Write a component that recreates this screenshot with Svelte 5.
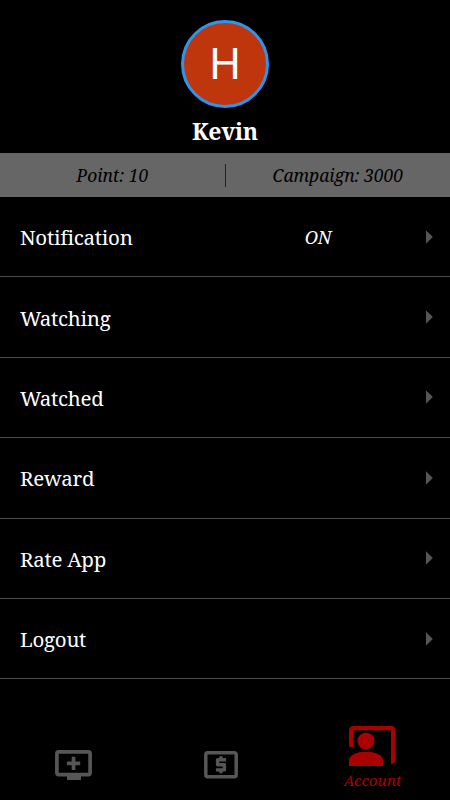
<script lang="ts">
    type MenuItem = {
        label: string;
        value?: string;
    };

    const name = "Kevin";
    const points = 10;
    const campaign = 3000;

    let notificationsOn = $state(true);

    let items: MenuItem[] = $derived([
        { label: "Notification", value: notificationsOn ? "ON" : "OFF" },
        { label: "Watching" },
        { label: "Watched" },
        { label: "Reward" },
        { label: "Rate App" },
        { label: "Logout" },
    ]);

    function select(item: MenuItem) {
        if (item.label === "Notification") {
            notificationsOn = !notificationsOn;
        }
    }
</script>

<div class="screen">
    <header>
        <div class="avatar">H</div>
        <h1>{name}</h1>
    </header>

    <div class="stats">
        <span class="point">Point: {points}</span>
        <span class="divider"></span>
        <span class="campaign">Campaign: {campaign}</span>
    </div>

    <main>
        {#each items as item}
            <button class="row" type="button" onclick={() => select(item)}>
                <span class="label">{item.label}</span>
                {#if item.value}
                    <span class="value">{item.value}</span>
                {/if}
                <svg class="arrow" width="7" height="14" viewBox="0 0 7 14">
                    <path d="M0 0.3 6.8 7 0 13.7z" fill="#565656" />
                </svg>
            </button>
        {/each}
    </main>

    <nav>
        <button class="tab videos" type="button" aria-label="Add video">
            <svg width="37" height="31" viewBox="0 0 37 31">
                <rect x="1.9" y="1.9" width="33.2" height="22.7" rx="1.8" fill="none" stroke="#565656" stroke-width="3.7" />
                <path d="M12 25h14v5H12zM16.7 6.8h3.7v4.8h4.8v3.7h-4.8V20h-3.7v-4.7h-4.8v-3.7h4.8z" fill="#565656" />
            </svg>
        </button>
        <button class="tab campaigns" type="button" aria-label="Campaign">
            <svg width="34" height="28" viewBox="0 0 34 28">
                <rect x="1.8" y="1.8" width="30.4" height="24" rx="2" fill="none" stroke="#565656" stroke-width="3.5" />
                <path
                    d="M15.3 22.3h3.4v-1.7h1.7c1 0 1.7-.8 1.7-1.7v-5.1c0-1-.8-1.7-1.7-1.7h-5.1v-1.7h6.8V7h-3.4V5.3h-3.4V7h-1.7c-1 0-1.7.8-1.7 1.7v5.1c0 1 .8 1.7 1.7 1.7h5.1v1.7h-6.8v3.4h3.4z"
                    fill="#565656"
                />
            </svg>
        </button>
        <button class="tab active" type="button">
            <svg width="47" height="41" viewBox="0 0 47 41">
                <path
                    d="M0 21V4.5Q0 0 4.5 0H42Q46.5 0 46.5 4.5V33.5Q46.5 38 42 38V4.3H4.3V21z"
                    fill="#a90000"
                />
                <circle cx="17" cy="15" r="8.6" fill="#a90000" />
                <path d="M0 40V34.5C0 28.5 8 25.7 17 25.7S34 28.5 34 34.5V40z" fill="#a90000" />
            </svg>
            <span>Account</span>
        </button>
    </nav>
</div>

<style>
    :global(body) {
        background: #000;
    }

    .screen {
        width: 450px;
        height: 800px;
        display: flex;
        flex-direction: column;
        overflow: hidden;
        background: #000;
        color: #fff;
        font-family: "Noto Serif", "DejaVu Serif Condensed", "DejaVu Serif", serif;
        font-stretch: condensed;
    }

    button {
        border: 0;
        padding: 0;
        background: none;
        color: inherit;
        font: inherit;
        text-align: left;
    }

    header {
        height: 153px;
        box-sizing: border-box;
        padding-top: 20px;
        display: flex;
        flex-direction: column;
        align-items: center;
    }

    .avatar {
        width: 88px;
        height: 88px;
        box-sizing: border-box;
        border: 3px solid #2c96ee;
        border-radius: 50%;
        background: #bf360c;
        font: 44px/79px "Noto Sans", sans-serif;
        text-align: center;
    }

    h1 {
        margin: 7px 0 0;
        font-size: 23px;
        line-height: 32px;
        font-weight: 700;
        letter-spacing: -0.2px;
    }

    .stats {
        height: 44px;
        display: grid;
        grid-template-columns: 1fr 1px 1fr;
        align-items: center;
        background: #666;
        color: #000;
        font-size: 17.5px;
        font-style: italic;
        letter-spacing: -0.05px;
        text-align: center;
    }

    .divider {
        height: 23px;
        background: #222;
    }

    .row {
        width: 100%;
        height: 80.4px;
        box-sizing: border-box;
        padding: 0 17px 0 20px;
        border-bottom: 1px solid #4b4b4b;
        display: grid;
        grid-template-columns: 1fr 54px 81px 7px;
        align-items: center;
    }

    .label {
        padding-top: 1px;
        font-size: 20.5px;
        letter-spacing: -0.27px;
    }

    .value {
        font-size: 18px;
        font-style: italic;
        letter-spacing: -0.3px;
        text-align: center;
    }

    .arrow {
        grid-column: 4;
    }

    nav {
        flex: 1;
        margin-right: 6px;
        display: grid;
        grid-template-columns: repeat(3, 1fr);
    }

    .tab {
        display: flex;
        flex-direction: column;
        align-items: center;
        padding-top: 71px;
    }

    .tab.videos {
        padding-right: 2px;
    }

    .tab.campaigns {
        padding: 72px 2px 0 0;
    }

    .tab.active {
        padding: 47px 0 0 5px;
        color: #a90000;
        font-size: 15.2px;
        font-style: italic;
    }

    .tab span {
        line-height: 20px;
        margin-top: 3px;
    }
</style>
